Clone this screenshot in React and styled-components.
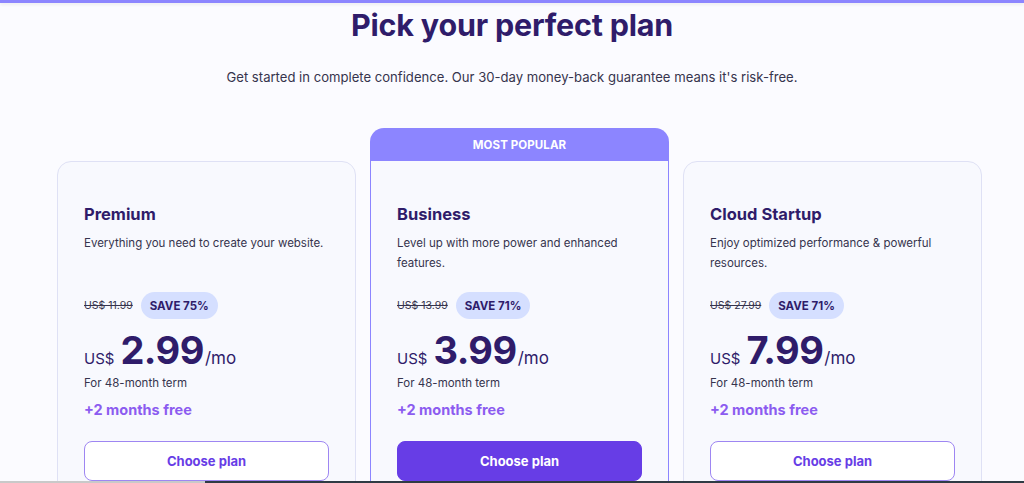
import styled, { createGlobalStyle } from "styled-components";

const GlobalStyle = createGlobalStyle`
  body {
    margin: 0;
    background: #fbfbff;
    font-family: Inter, "Noto Sans", sans-serif;
    color: #2f1c6a;
  }
`;

const TopBar = styled.div`
  height: 3px;
  background: #8c85ff;
  box-shadow: 0 2px 3px rgba(0, 0, 0, 0.06);
`;

const Header = styled.header`
  display: flex;
  flex-direction: column;
  align-items: center;
`;

const Title = styled.h1`
  margin: 2px 0 0;
  font-size: 30.5px;
  line-height: 40px;
  font-weight: 700;
  letter-spacing: -0.2px;
  color: #2f1c6a;
`;

const Subtitle = styled.p`
  margin: 22px 0 0;
  font-size: 13.1px;
  line-height: 20px;
  color: #36344d;
`;

const Plans = styled.div`
  display: grid;
  grid-template-columns: repeat(3, 299px);
  gap: 14px;
  justify-content: center;
  align-items: start;
  margin-top: 41px;
  padding-left: 15px;
`;

const PlanColumn = styled.div`
  margin-top: ${(p) => (p.$popular ? "0" : "33px")};
  display: flex;
  flex-direction: column;
`;

const PopularTab = styled.div`
  height: 33px;
  border-radius: 14px 14px 0 0;
  background: #8c85ff;
  color: #fff;
  font-size: 11.5px;
  font-weight: 700;
  display: flex;
  align-items: center;
  justify-content: center;
  letter-spacing: 0.1px;
`;

const Card = styled.div`
  background: #f8f9fe;
  border: 1px solid ${(p) => (p.$popular ? "#8c85ff" : "#dfe1f5")};
  border-top: ${(p) => (p.$popular ? "none" : undefined)};
  border-radius: ${(p) => (p.$popular ? "0 0 14px 14px" : "14px")};
  padding: ${(p) => (p.$popular ? "41px" : "40px")} 26px 40px;
  height: 340px;
`;

const PlanName = styled.h2`
  margin: 0;
  font-size: 16.5px;
  line-height: 24px;
  font-weight: 700;
  color: #2f1c6a;
`;

const Description = styled.p`
  margin: 7px 0 0;
  font-size: 11.5px;
  line-height: 20px;
  color: #36344d;
  min-height: 40px;
`;

const OldPriceRow = styled.div`
  display: flex;
  align-items: center;
  gap: 8px;
  margin-top: 19px;
`;

const OldPrice = styled.span`
  font-size: 10.5px;
  color: #36344d;
  text-decoration: line-through;
`;

const SaveBadge = styled.span`
  background: #d5dfff;
  color: #2f1c6a;
  font-size: 11.5px;
  font-weight: 700;
  height: 27px;
  padding: 0 9px;
  border-radius: 14px;
  display: flex;
  align-items: center;
`;

const PriceRow = styled.div`
  display: flex;
  align-items: baseline;
  margin-top: 8px;
  color: #2f1c6a;
`;

const Currency = styled.span`
  font-size: 15px;
  margin-right: 6px;
`;

const Amount = styled.span`
  font-size: 38px;
  font-weight: 700;
  letter-spacing: -0.5px;
  line-height: 46px;
`;

const Per = styled.span`
  font-size: 17px;
  margin-left: 1px;
`;

const Term = styled.div`
  font-size: 11.5px;
  line-height: 16px;
  color: #36344d;
  margin-top: 2px;
`;

const Bonus = styled.div`
  margin-top: 10px;
  font-size: 14.5px;
  font-weight: 700;
  color: #8c5cf0;
`;

const ChooseButton = styled.button`
  margin-top: 23px;
  width: 100%;
  height: 40px;
  border-radius: 8px;
  font-family: inherit;
  font-size: 13px;
  font-weight: 700;
  cursor: pointer;
  border: 1.5px solid ${(p) => (p.$primary ? "#673de6" : "#9e86f2")};
  background: ${(p) => (p.$primary ? "#673de6" : "#fff")};
  color: ${(p) => (p.$primary ? "#fff" : "#673de6")};
`;

const BottomEdge = styled.div`
  position: fixed;
  left: 0;
  right: 0;
  bottom: 0;
  height: 2px;
  background: linear-gradient(to right, #c9c9c9 0 205px, #2f3b44 205px);
`;

const plans = [
  {
    name: "Premium",
    description: "Everything you need to create your website.",
    oldPrice: "US$ 11.99",
    save: "SAVE 75%",
    price: "2.99",
  },
  {
    name: "Business",
    description: "Level up with more power and enhanced features.",
    oldPrice: "US$ 13.99",
    save: "SAVE 71%",
    price: "3.99",
    popular: true,
  },
  {
    name: "Cloud Startup",
    description: "Enjoy optimized performance & powerful resources.",
    oldPrice: "US$ 27.99",
    save: "SAVE 71%",
    price: "7.99",
  },
];

export default function App() {
  return (
    <>
      <GlobalStyle />
      <TopBar />
      <Header>
        <Title>Pick your perfect plan</Title>
        <Subtitle>
          Get started in complete confidence. Our 30-day money-back guarantee means it's risk-free.
        </Subtitle>
      </Header>
      <Plans>
        {plans.map((plan) => (
          <PlanColumn key={plan.name} $popular={plan.popular}>
            {plan.popular && <PopularTab>MOST POPULAR</PopularTab>}
            <Card $popular={plan.popular}>
              <PlanName>{plan.name}</PlanName>
              <Description>{plan.description}</Description>
              <OldPriceRow>
                <OldPrice>{plan.oldPrice}</OldPrice>
                <SaveBadge>{plan.save}</SaveBadge>
              </OldPriceRow>
              <PriceRow>
                <Currency>US$</Currency>
                <Amount>{plan.price}</Amount>
                <Per>/mo</Per>
              </PriceRow>
              <Term>For 48-month term</Term>
              <Bonus>+2 months free</Bonus>
              <ChooseButton $primary={plan.popular}>Choose plan</ChooseButton>
            </Card>
          </PlanColumn>
        ))}
      </Plans>
      <BottomEdge />
    </>
  );
}
